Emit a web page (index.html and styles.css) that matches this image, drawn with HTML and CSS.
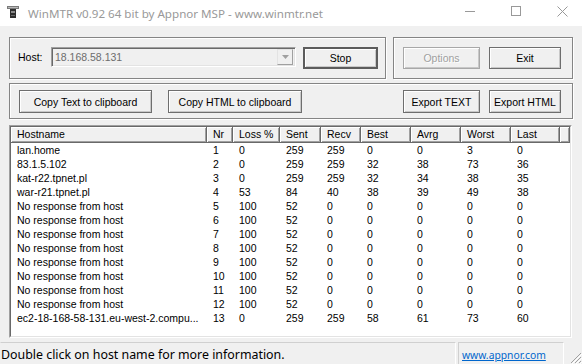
FILE: index.html
```html
<!DOCTYPE html>
<html>
<head>
<meta charset="utf-8">
<title>WinMTR</title>
<link rel="stylesheet" href="styles.css">
</head>
<body>
<div class="window">
  <div class="titlebar">
    <svg class="appicon" width="12" height="12" viewBox="0 0 12 12">
      <rect x="0" y="0" width="12" height="3" fill="#7a7a7a"/>
      <rect x="1" y="1" width="10" height="1" fill="#b8b8b8"/>
      <rect x="3" y="3" width="6" height="9" fill="#2e2e2e"/>
      <rect x="4" y="5" width="4" height="2" fill="#8a8a8a"/>
      <rect x="4" y="9" width="4" height="1" fill="#6a6a6a"/>
    </svg>
    <span class="title">WinMTR v0.92 64 bit by Appnor MSP - www.winmtr.net</span>
    <div class="controls">
      <span class="ctl"><svg width="10" height="10" viewBox="0 0 10 10"><line x1="0" y1="5.5" x2="10" y2="5.5" stroke="#999" stroke-width="1"/></svg></span>
      <span class="ctl"><svg width="10" height="10" viewBox="0 0 10 10"><rect x="0.5" y="0.5" width="9" height="9" fill="none" stroke="#999" stroke-width="1"/></svg></span>
      <span class="ctl"><svg width="11" height="11" viewBox="0 0 11 11"><path d="M0.5 0.5L10.5 10.5M10.5 0.5L0.5 10.5" stroke="#999" stroke-width="1"/></svg></span>
    </div>
  </div>

  <div class="client">
    <div class="toprow">
      <div class="group g1">
        <span class="label">Host:</span>
        <div class="combo">
          <span class="combo-text">18.168.58.131</span>
          <span class="combo-arrow"><svg width="7" height="4" viewBox="0 0 7 4"><path d="M0 0H7L3.5 4Z" fill="#a0a0a0"/></svg></span>
        </div>
        <button class="btn default stop">Stop</button>
      </div>
      <div class="group g2">
        <button class="btn disabled w77">Options</button>
        <button class="btn exit">Exit</button>
      </div>
    </div>

    <div class="group g3">
      <button class="btn copytext">Copy Text to clipboard</button>
      <button class="btn copyhtml">Copy HTML to clipboard</button>
      <button class="btn w77 exporttext">Export TEXT</button>
      <button class="btn exit">Export HTML</button>
    </div>

    <div class="list">
      <div class="list-inner">
        <div class="grid hdr">
          <div class="hc">Hostname</div><div class="hc">Nr</div><div class="hc">Loss %</div><div class="hc">Sent</div><div class="hc">Recv</div><div class="hc">Best</div><div class="hc">Avrg</div><div class="hc">Worst</div><div class="hc">Last</div><div class="hc"></div>
        </div>
        <div class="grid row"><span>lan.home</span><span>1</span><span>0</span><span>259</span><span>259</span><span>0</span><span>0</span><span>3</span><span>0</span><span></span></div>
        <div class="grid row"><span>83.1.5.102</span><span>2</span><span>0</span><span>259</span><span>259</span><span>32</span><span>38</span><span>73</span><span>36</span><span></span></div>
        <div class="grid row"><span>kat-r22.tpnet.pl</span><span>3</span><span>0</span><span>259</span><span>259</span><span>32</span><span>34</span><span>38</span><span>35</span><span></span></div>
        <div class="grid row"><span>war-r21.tpnet.pl</span><span>4</span><span>53</span><span>84</span><span>40</span><span>38</span><span>39</span><span>49</span><span>38</span><span></span></div>
        <div class="grid row"><span>No response from host</span><span>5</span><span>100</span><span>52</span><span>0</span><span>0</span><span>0</span><span>0</span><span>0</span><span></span></div>
        <div class="grid row"><span>No response from host</span><span>6</span><span>100</span><span>52</span><span>0</span><span>0</span><span>0</span><span>0</span><span>0</span><span></span></div>
        <div class="grid row"><span>No response from host</span><span>7</span><span>100</span><span>52</span><span>0</span><span>0</span><span>0</span><span>0</span><span>0</span><span></span></div>
        <div class="grid row"><span>No response from host</span><span>8</span><span>100</span><span>52</span><span>0</span><span>0</span><span>0</span><span>0</span><span>0</span><span></span></div>
        <div class="grid row"><span>No response from host</span><span>9</span><span>100</span><span>52</span><span>0</span><span>0</span><span>0</span><span>0</span><span>0</span><span></span></div>
        <div class="grid row"><span>No response from host</span><span>10</span><span>100</span><span>52</span><span>0</span><span>0</span><span>0</span><span>0</span><span>0</span><span></span></div>
        <div class="grid row"><span>No response from host</span><span>11</span><span>100</span><span>52</span><span>0</span><span>0</span><span>0</span><span>0</span><span>0</span><span></span></div>
        <div class="grid row"><span>No response from host</span><span>12</span><span>100</span><span>52</span><span>0</span><span>0</span><span>0</span><span>0</span><span>0</span><span></span></div>
        <div class="grid row"><span>ec2-18-168-58-131.eu-west-2.compu...</span><span>13</span><span>0</span><span>259</span><span>259</span><span>58</span><span>61</span><span>73</span><span>60</span><span></span></div>
      </div>
    </div>
  </div>

  <div class="statusbar">
    <div class="pane pane1">Double click on host name for more information.</div>
    <div class="pane pane2"><a class="link" href="#">www.appnor.com</a></div>
    <svg class="grip" width="14" height="14" viewBox="0 0 14 14">
      <path d="M13 3L3 13M13 7L7 13M13 11L11 13" stroke="#a0a0a0" stroke-width="1"/>
      <path d="M14 4L4 14M14 8L8 14M14 12L12 14" stroke="#fff" stroke-width="1"/>
    </svg>
  </div>
</div>
</body>
</html>
```

FILE: styles.css
```css
html, body {
  margin: 0;
  padding: 0;
}
body {
  width: 582px;
  height: 364px;
  overflow: hidden;
  background: #f0f0f0;
}
.window {
  width: 582px;
  height: 364px;
  display: flex;
  flex-direction: column;
  font-family: "Liberation Sans", Arial, sans-serif;
  font-size: 10.5px;
  color: #000;
}

/* title bar */
.titlebar {
  height: 26px;
  background: #ffffff;
  display: flex;
  align-items: center;
  flex: none;
}
.appicon {
  margin-left: 7px;
  margin-top: -2px;
}
.title {
  margin-left: 9px;
  font-family: "Noto Sans", "Open Sans", sans-serif;
  font-size: 11.6px;
  color: #999999;
}
.controls {
  margin-left: auto;
  margin-right: -3px;
  display: flex;
  height: 26px;
}
.ctl {
  width: 46px;
  height: 26px;
  display: flex;
  align-items: center;
  justify-content: center;
  margin-top: -2px;
}

/* client area */
.client {
  padding-left: 9px;
  width: 564px;
  flex: none;
}
.toprow {
  margin-top: 11px;
  display: flex;
  gap: 7px;
}
.group {
  box-sizing: border-box;
  border: 1px solid #858585;
  box-shadow: inset 1px 1px #ffffff, 1px 1px #ffffff;
  display: flex;
  align-items: flex-start;
}
.g1 {
  width: 377px;
  height: 42px;
  padding: 9px 0 0 8px;
}
.g2 {
  width: 180px;
  height: 42px;
  padding: 9px 0 0 9px;
  gap: 9px;
}
.g3 {
  margin-top: 4px;
  width: 564px;
  height: 36px;
  padding: 6px 11px 0 9px;
}
.label {
  width: 33px;
  line-height: 20px;
}

/* combo */
.combo {
  box-sizing: border-box;
  width: 245px;
  height: 20px;
  border: 1px solid;
  border-color: #a0a0a0 #ffffff #ffffff #a0a0a0;
  box-shadow: inset 1px 1px #696969, inset -1px -1px #e3e3e3;
  background: #f0f0f0;
  display: flex;
  align-items: center;
  padding: 0 2px 0 3px;
}
.combo-text {
  color: #6d6d6d;
  flex: 1;
}
.combo-arrow {
  box-sizing: border-box;
  width: 16px;
  height: 16px;
  border: 1px solid;
  border-color: #e3e3e3 #a0a0a0 #a0a0a0 #e3e3e3;
  display: flex;
  align-items: center;
  justify-content: center;
  background: #f0f0f0;
}

/* buttons */
.btn {
  box-sizing: border-box;
  font-family: "Liberation Sans", Arial, sans-serif;
  font-size: 10.5px;
  color: #000;
  background: #f0f0f0;
  border: 1px solid #6e6e6e;
  box-shadow: inset 1px 1px #ffffff, inset -1px -1px #c8c8c8;
  height: 22px;
  padding: 0;
  margin: 0;
  display: flex;
  align-items: center;
  justify-content: center;
}
.default {
  border: 2px solid #5c5c5c;
}
.stop {
  width: 75px;
  margin-left: 7px;
}
.disabled {
  color: #a0a0a0;
  text-shadow: 1px 1px #ffffff;
  border-color: #a8a8a8;
}
.w77 {
  width: 77px;
}
.exit {
  width: 72px;
}
.g3 .btn {
  height: 23px;
}
.copytext {
  width: 133px;
}
.copyhtml {
  width: 134px;
  margin-left: 16px;
}
.exporttext {
  margin-left: auto;
  margin-right: 9px;
}

/* list */
.list {
  margin-top: 6px;
  box-sizing: border-box;
  width: 563px;
  height: 213px;
  border: 1px solid;
  border-color: #a0a0a0 #ffffff #ffffff #a0a0a0;
}
.list-inner {
  box-sizing: border-box;
  height: 100%;
  border: 1px solid;
  border-color: #696969 #e3e3e3 #e3e3e3 #696969;
  background: #ffffff;
}
.grid {
  display: grid;
  grid-template-columns: 196px 26px 47px 41px 40px 50px 50px 50px 49px 1fr;
}
.hdr {
  height: 16px;
  background: #f0f0f0;
}
.hc {
  box-sizing: border-box;
  height: 16px;
  line-height: 15px;
  padding-left: 6px;
  box-shadow: inset -1px -1px #696969, inset 1px 1px #ffffff, inset -2px -2px #a0a0a0;
  white-space: nowrap;
}
.row {
  height: 14px;
  line-height: 14px;
}
.row span {
  padding-left: 6px;
  white-space: nowrap;
  overflow: hidden;
}

/* status bar */
.statusbar {
  margin-top: 4px;
  height: 22px;
  display: flex;
  font-family: "Noto Sans", "Open Sans", sans-serif;
  font-size: 12.4px;
  position: relative;
}
.pane {
  box-sizing: border-box;
  height: 22px;
  border-top: 1px solid #d0d0d0;
  border-left: 1px solid #d0d0d0;
  border-right: 1px solid #ffffff;
  padding-top: 2px;
  line-height: 20px;
  white-space: nowrap;
}
.pane1 {
  width: 456px;
  padding-left: 0;
  border-left-color: #f0f0f0;
}
.pane2 {
  width: 106px;
  margin-left: 2px;
  padding-left: 3px;
}
.link {
  color: #0066cc;
  text-decoration: underline;
  font-size: 10.3px;
}
.grip {
  position: absolute;
  right: 0;
  bottom: 0;
}
```
